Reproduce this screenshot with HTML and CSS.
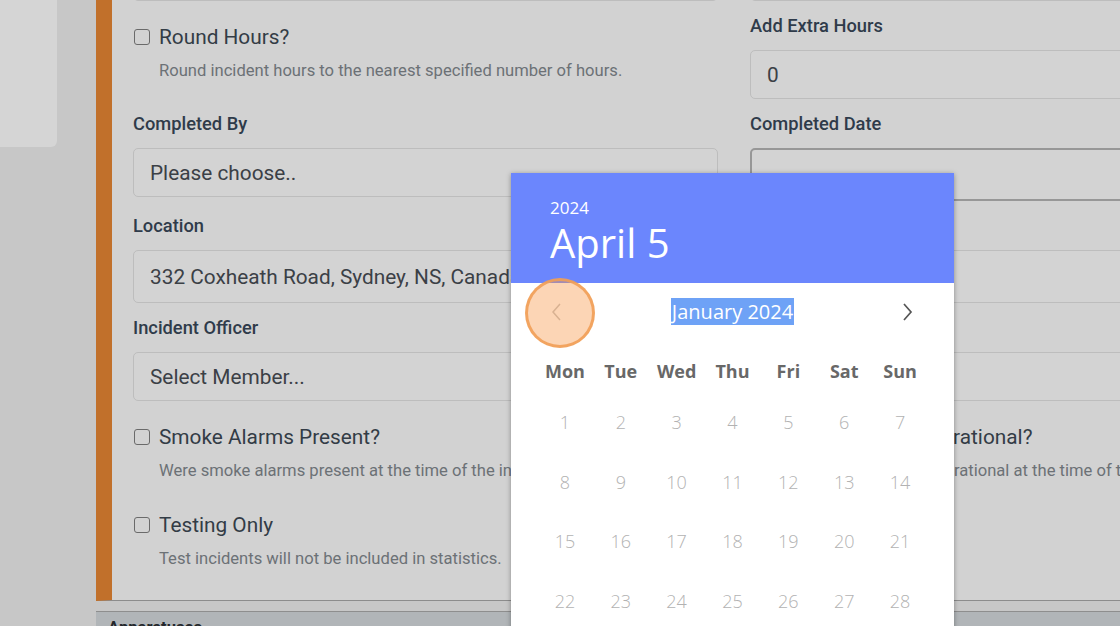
FILE: index.html
```html
<!DOCTYPE html>
<html lang="en">
<head>
<meta charset="utf-8">
<title>Incident form</title>
<link rel="stylesheet" href="styles.css">
</head>
<body>
<div class="page">
  <aside class="sidebar"><div class="side-card"></div></aside>
  <main class="main">
    <section class="card">
      <div class="form-grid">
        <div class="input"></div>
        <div class="input"></div>

        <div class="check-group">
          <label class="check-line"><span class="box"></span><span>Round Hours?</span></label>
          <p class="hint">Round incident hours to the nearest specified number of hours.</p>
        </div>
        <div class="field">
          <div class="label">Add Extra Hours</div>
          <div class="input">0</div>
        </div>

        <div class="field">
          <div class="label">Completed By</div>
          <div class="input">Please choose..</div>
        </div>
        <div class="field">
          <div class="label">Completed Date</div>
          <div class="input tall focused"></div>
        </div>

        <div class="field wide">
          <div class="label">Location</div>
          <div class="input tall">332 Coxheath Road, Sydney, NS, Canada</div>
        </div>

        <div class="field wide">
          <div class="label">Incident Officer</div>
          <div class="input">Select Member...</div>
        </div>

        <div class="check-group">
          <label class="check-line"><span class="box"></span><span>Smoke Alarms Present?</span></label>
          <p class="hint">Were smoke alarms present at the time of the incident?</p>
        </div>
        <div class="check-group">
          <label class="check-line"><span class="box"></span><span>Smoke Alarms Operational?</span></label>
          <p class="hint">Were smoke alarms operational at the time of the incident?</p>
        </div>

        <div class="check-group">
          <label class="check-line"><span class="box"></span><span>Testing Only</span></label>
          <p class="hint">Test incidents will not be included in statistics.</p>
        </div>
      </div>
    </section>
    <section class="panel-head">Apparatuses</section>
  </main>
</div>

<div class="picker">
  <div class="picker-head">
    <div class="year">2024</div>
    <div class="big-date">April 5</div>
  </div>
  <div class="nav">
    <svg class="chev prev" width="20" height="24" viewBox="0 0 20 24"><polyline points="13,4 6,12 13,20" fill="none" stroke="#c4c4c4" stroke-width="1.5"/></svg>
    <span class="month"><span class="sel">January 2024</span></span>
    <svg class="chev" width="20" height="24" viewBox="0 0 20 24"><polyline points="6,4 13,12 6,20" fill="none" stroke="#555" stroke-width="1.7"/></svg>
  </div>
  <div class="weekdays">
    <span>Mon</span><span>Tue</span><span>Wed</span><span>Thu</span><span>Fri</span><span>Sat</span><span>Sun</span>
  </div>
  <div class="days">
    <span>1</span><span>2</span><span>3</span><span>4</span><span>5</span><span>6</span><span>7</span>
    <span>8</span><span>9</span><span>10</span><span>11</span><span>12</span><span>13</span><span>14</span>
    <span>15</span><span>16</span><span>17</span><span>18</span><span>19</span><span>20</span><span>21</span>
    <span>22</span><span>23</span><span>24</span><span>25</span><span>26</span><span>27</span><span>28</span>
  </div>
</div>
<div class="click-ring"></div>
</body>
</html>
```
FILE: styles.css
```css
* { box-sizing: border-box; }
html, body {
  margin: 0;
  width: 1120px;
  height: 626px;
  overflow: hidden;
  background: #c7c7c7;
  font-family: Roboto, "Liberation Sans", sans-serif;
}
.page {
  display: flex;
  align-items: flex-start;
  width: 1500px;
}
.sidebar {
  width: 57px;
  flex-shrink: 0;
}
.side-card {
  height: 147px;
  background: #d5d5d5;
  border-bottom-right-radius: 6px;
}
.main {
  margin-left: 39px;
  width: 1300px;
  flex-shrink: 0;
}
.card {
  margin-top: -48px;
  background: #d2d2d2;
  border-left: 16px solid #c1702b;
  border-bottom: 1px solid #8c8c8c;
  padding: 0 0 23px 21px;
}
.form-grid {
  display: grid;
  grid-template-columns: 585px 585px;
  column-gap: 32px;
  row-gap: 13px;
  align-items: start;
}
.wide { grid-column: 1 / -1; }
.label {
  font-size: 18.3px;
  font-weight: 500;
  line-height: 24px;
  color: #2f3b4a;
  margin-bottom: 12px;
}
.input {
  height: 49px;
  border: 1px solid #bdbdbd;
  border-radius: 5px;
  background: #d3d3d3;
  padding: 0 16px;
  display: flex;
  align-items: center;
  font-size: 20.8px;
  color: #3b4046;
  white-space: nowrap;
  overflow: hidden;
}
.input.tall { height: 53px; }
.input.focused {
  border: 2px solid #979797;
  border-radius: 5px;
}
.check-group {
  padding: 8px 0 7px;
}
.check-line {
  display: flex;
  align-items: center;
  height: 30px;
  font-size: 20.8px;
  color: #333c46;
  white-space: nowrap;
}
.box {
  width: 16px;
  height: 16px;
  margin-left: 1px;
  margin-right: 9px;
  border: 1.5px solid #6a6a6a;
  border-radius: 3px;
  flex-shrink: 0;
}
.hint {
  margin: 8px 0 0 26px;
  font-size: 16.6px;
  line-height: 22px;
  color: #6c7176;
  white-space: nowrap;
}
.panel-head {
  margin-top: 10px;
  border-top: 1px solid #8e8e8e;
  background: #b1b5b8;
  padding: 6px 12px;
  font-size: 16.6px;
  font-weight: 700;
  color: #23272b;
  height: 40px;
}

/* date picker */
.picker {
  position: absolute;
  left: 511px;
  top: 173px;
  width: 443px;
  height: 480px;
  background: #fff;
  box-shadow: 0 1px 5px rgba(0, 0, 0, 0.35);
  font-family: "Open Sans", "Noto Sans", sans-serif;
}
.picker-head {
  height: 110px;
  background: #6b86fd;
  color: #fff;
  padding: 24px 39px 0;
}
.year {
  font-size: 17px;
  line-height: 22px;
}
.big-date {
  font-size: 40px;
  line-height: 48px;
}
.nav {
  height: 58px;
  display: flex;
  align-items: center;
  justify-content: space-between;
  padding: 0 36px;
}
.chev { display: block; }
.month {
  font-size: 20px;
  color: #fff;
  line-height: 26px;
}
.sel {
  background: #6ea2f6;
  padding: 0 1px;
}
.weekdays, .days {
  display: grid;
  grid-template-columns: repeat(7, 1fr);
  padding: 0 26px;
  text-align: center;
}
.weekdays {
  padding-top: 18px;
  padding-bottom: 9px;
  font-size: 18px;
  font-weight: 700;
  line-height: 24px;
  color: #686868;
}
.days {
  grid-auto-rows: 59.7px;
  align-items: center;
  font-size: 18px;
  font-weight: 300;
  color: #b2b2b2;
}
.click-ring {
  position: absolute;
  left: 525px;
  top: 278px;
  width: 70px;
  height: 70px;
  border-radius: 50%;
  background: rgba(248, 150, 70, 0.4);
  border: 3px solid rgba(241, 158, 88, 0.9);
}
```
